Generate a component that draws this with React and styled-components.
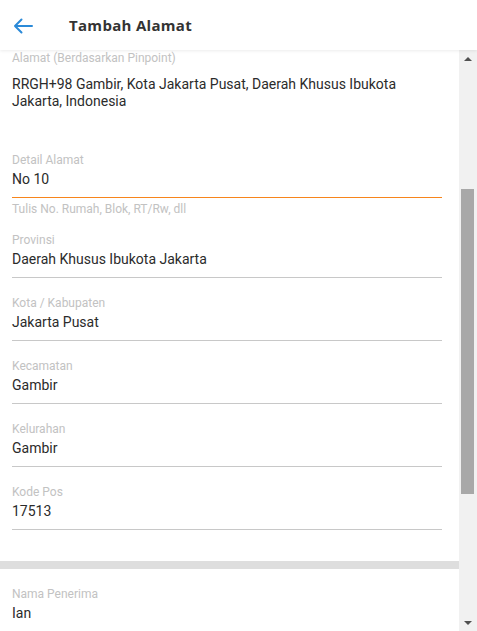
import React from 'react'
import styled, { createGlobalStyle } from 'styled-components'

const GlobalStyle = createGlobalStyle`
  html, body {
    margin: 0;
    padding: 0;
    background: #fff;
    font-family: Roboto, "Liberation Sans", sans-serif;
  }
  * { box-sizing: border-box; }
`

const Page = styled.div`
  display: flex;
  flex-direction: column;
  height: 100vh;
  overflow: hidden;
`

const Header = styled.header`
  position: relative;
  z-index: 2;
  display: flex;
  align-items: center;
  height: 50px;
  flex-shrink: 0;
  padding: 0 0 0 12px;
  background: #fff;
  box-shadow: 0 1px 3px rgba(0, 0, 0, 0.08);
`

const BackButton = styled.button`
  display: flex;
  align-items: center;
  justify-content: center;
  width: 22px;
  height: 22px;
  padding: 0;
  margin-top: 1px;
  border: 0;
  background: none;
  cursor: pointer;
`

const Title = styled.h1`
  margin: 0 0 0 35px;
  font-family: "Open Sans", "Liberation Sans", sans-serif;
  font-size: 15px;
  font-weight: 700;
  color: #333;
  letter-spacing: 0.3px;
`

const Body = styled.div`
  display: flex;
  flex: 1;
  min-height: 0;
`

const Content = styled.main`
  flex: 1;
  min-width: 0;
  overflow: hidden;
`

const Form = styled.div`
  padding: 1px 17px 0 12px;
`

const Field = styled.div`
  margin-bottom: ${p => p.$gap ?? 18}px;
`

const Label = styled.div`
  font-size: 12px;
  line-height: 14px;
  color: #c2c2c2;
`

const Value = styled.div`
  margin-top: 2px;
  padding-bottom: 8px;
  font-size: 14px;
  line-height: 20px;
  color: #2b2b2b;
`

const Underline = styled.div`
  height: 1px;
  background: ${p => (p.$active ? '#f7851c' : '#c8c8c8')};
`

const Address = styled.div`
  margin-top: 11px;
  min-height: 59px;
  font-size: 14px;
  line-height: 17px;
  color: #2b2b2b;
`

const Helper = styled.div`
  margin-top: 4px;
  font-size: 12px;
  line-height: 14px;
  color: #c2c2c2;
`

const Divider = styled.div`
  height: 8px;
  margin: 31px 0 17px;
  background: #dedede;
`

const Scrollbar = styled.div`
  display: flex;
  flex-direction: column;
  width: 18px;
  flex-shrink: 0;
  background: #f1f1f1;
`

const Arrow = styled.div`
  display: flex;
  align-items: center;
  justify-content: center;
  height: 17px;
  flex-shrink: 0;
  &::before {
    content: '';
    border-left: 4px solid transparent;
    border-right: 4px solid transparent;
    ${p =>
      p.$down
        ? 'border-top: 4px solid #505050;'
        : 'border-bottom: 4px solid #505050;'}
  }
`

const Track = styled.div`
  flex: 1;
  padding: 122px 3px 0 2px;
`

const Thumb = styled.div`
  height: 305px;
  background: #a8a8a8;
`

const fields = [
  { label: 'Provinsi', value: 'Daerah Khusus Ibukota Jakarta' },
  { label: 'Kota / Kabupaten', value: 'Jakarta Pusat' },
  { label: 'Kecamatan', value: 'Gambir' },
  { label: 'Kelurahan', value: 'Gambir' },
  { label: 'Kode Pos', value: '17513' }
]

export default function App() {
  return (
    <Page>
      <GlobalStyle />
      <Header>
        <BackButton aria-label="Kembali">
          <svg width="20" height="16" viewBox="0 0 20 16" fill="none">
            <path
              d="M19 8H2M8.5 1.5L2 8l6.5 6.5"
              stroke="#2b8ad8"
              strokeWidth="2"
              strokeLinecap="round"
              strokeLinejoin="round"
            />
          </svg>
        </BackButton>
        <Title>Tambah Alamat</Title>
      </Header>
      <Body>
        <Content>
          <Form>
            <Field>
              <Label>Alamat (Berdasarkan Pinpoint)</Label>
              <Address>
                RRGH+98 Gambir, Kota Jakarta Pusat, Daerah Khusus Ibukota
                Jakarta, Indonesia
              </Address>
            </Field>
            <Field $gap={17}>
              <Label>Detail Alamat</Label>
              <Value>No 10</Value>
              <Underline $active />
              <Helper>Tulis No. Rumah, Blok, RT/Rw, dll</Helper>
            </Field>
            {fields.map((f, i) => (
              <Field key={f.label} $gap={i === fields.length - 1 ? 0 : 18}>
                <Label>{f.label}</Label>
                <Value>{f.value}</Value>
                <Underline />
              </Field>
            ))}
          </Form>
          <Divider />
          <Form>
            <Field>
              <Label>Nama Penerima</Label>
              <Value>Ian</Value>
              <Underline />
            </Field>
          </Form>
        </Content>
        <Scrollbar>
          <Arrow />
          <Track>
            <Thumb />
          </Track>
          <Arrow $down />
        </Scrollbar>
      </Body>
    </Page>
  )
}
